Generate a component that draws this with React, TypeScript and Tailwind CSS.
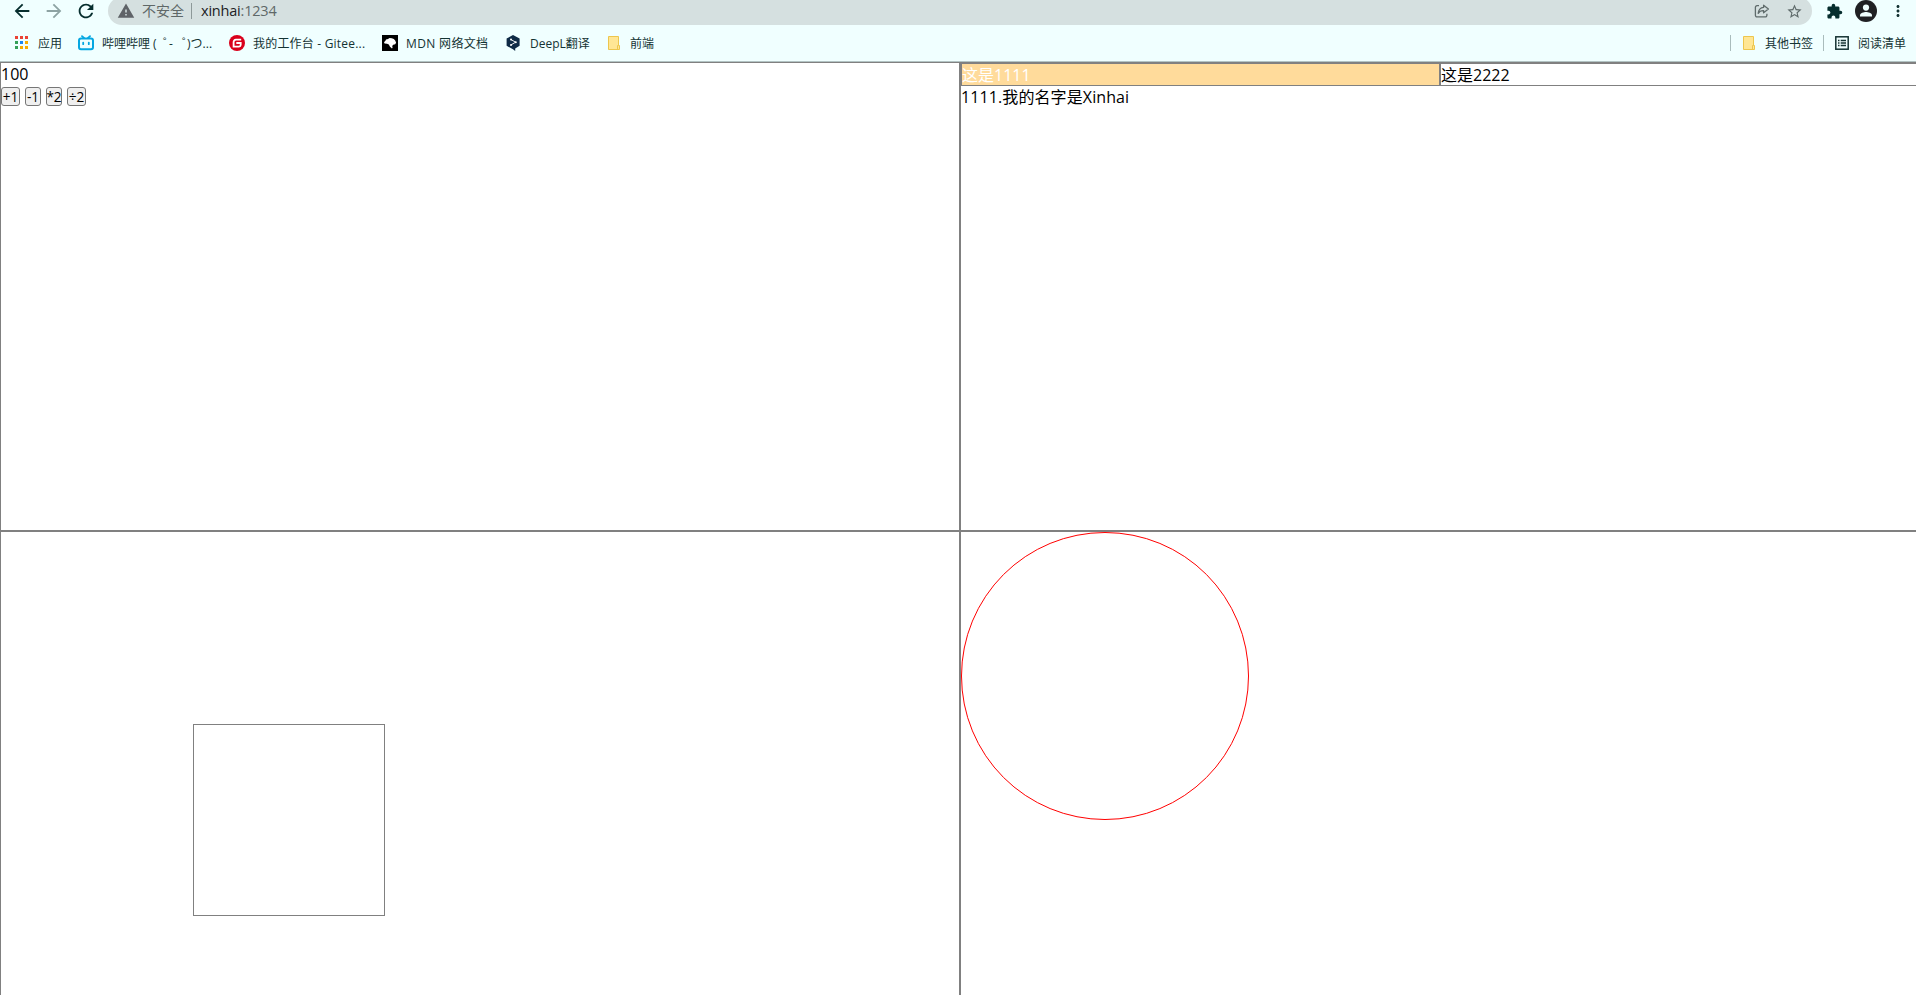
import { useState } from "react";
import type { ReactNode } from "react";
import {
  MdArrowBack,
  MdArrowForward,
  MdExtension,
  MdMoreVert,
  MdRefresh,
  MdStarBorder,
  MdWarning,
} from "react-icons/md";

function AppsIcon() {
  const colors = [
    ["#ea4335", "#ea4335", "#ea4335"],
    ["#34a058", "#1a86f5", "#f9ab00"],
    ["#34a058", "#f9ab00", "#f9ab00"],
  ];
  return (
    <svg width="16" height="16" viewBox="0 0 16 16">
      {colors.map((row, y) =>
        row.map((c, x) => (
          <rect key={`${x}${y}`} x={1 + x * 5} y={1 + y * 5} width="3" height="3" fill={c} />
        )),
      )}
    </svg>
  );
}

function BilibiliIcon() {
  return (
    <svg width="16" height="16" viewBox="0 0 16 16" fill="none" stroke="#06a7e1" strokeLinecap="round">
      <path d="M4 1.2 6 3M12 1.2 10 3" strokeWidth="1.8" />
      <rect x="1" y="3.5" width="14" height="10.8" rx="2" strokeWidth="2" />
      <path d="M5.2 7.6v1.6M10.8 7.6v1.6" strokeWidth="1.8" />
    </svg>
  );
}

function GiteeIcon() {
  return (
    <svg width="16" height="16" viewBox="0 0 16 16">
      <circle cx="8" cy="8" r="8" fill="#d9001b" />
      <path d="M12.2 4.6H7A2.6 2.6 0 0 0 4.6 7v4.6H10A1.8 1.8 0 0 0 11.7 10V8H7.3" fill="none" stroke="#fff" strokeWidth="1.8" />
    </svg>
  );
}

function MdnIcon() {
  return (
    <svg width="16" height="16" viewBox="0 0 16 16">
      <path fill="#000" d="M0 0h16v16H0z" />
      <path
        fill="#fff"
        d="M2 7.2 3.6 5.4 4 4.4 6 4l1.6-1 2.2.2 2 .8 1.4 1.6.9 2.2-.9 1.4-2 .6-1 1.2.4 1.5-.6 1L8 11.8 6.8 9.6 5 8.8 2.6 8.6Z"
      />
    </svg>
  );
}

function DeepLIcon() {
  return (
    <svg width="16" height="16" viewBox="0 0 16 16">
      <path fill="#0f2b46" d="M7 0 .6 3.6v7.2L7 14.3l2.2 1.7v-2.6l4.4-2.6V3.6Z" />
      <path d="M5 4.6 9.6 7.2 5 9.9" fill="none" stroke="#fff" strokeWidth="0.9" />
      <circle cx="5" cy="4.6" r="1" fill="#fff" />
      <circle cx="9.8" cy="7.2" r="1" fill="#fff" />
      <circle cx="5" cy="9.9" r="1" fill="#fff" />
    </svg>
  );
}

function FolderIcon() {
  return (
    <svg width="16" height="16" viewBox="0 0 16 16">
      <path d="M2.5 1.5h10v9h1v4h-11z" fill="#ffe694" stroke="#edc64d" />
      <path d="M11.5 14v-3.5h1" fill="none" stroke="#edc64d" />
    </svg>
  );
}

function ReadingListIcon() {
  return (
    <svg width="16" height="16" viewBox="0 0 16 16" stroke="#143333" fill="none">
      <rect x="1.8" y="1.8" width="12.4" height="12.4" strokeWidth="1.5" />
      <path d="M4 5.5h1.5M4 8h1.5M4 10.5h1.5M6.7 5.5H12M6.7 8H12M6.7 10.5H12" strokeWidth="1.3" />
    </svg>
  );
}

function ShareIcon() {
  return (
    <svg width="16" height="16" viewBox="0 0 16 16" fill="none" stroke="#5f6b6b" strokeWidth="1.3" strokeLinejoin="round">
      <path d="M5 2.7H3A1.6 1.6 0 0 0 1.4 4.3v8A1.6 1.6 0 0 0 3 13.9h8.3a1.6 1.6 0 0 0 1.6-1.6v-1.6" />
      <path d="M9.6 2.2 14.4 6 9.6 9.8V7.6C7 7.5 5.3 8.4 4.2 10.4 4.5 7 6.3 4.7 9.6 4.4Z" />
    </svg>
  );
}

function AvatarIcon() {
  return (
    <svg width="22" height="22" viewBox="0 0 22 22">
      <circle cx="11" cy="11" r="11" fill="#202124" />
      <circle cx="11" cy="7.6" r="3.1" fill="#f0ffff" />
      <path d="M5 16.6v-1.4c0-2.2 4-3.2 6-3.2s6 1 6 3.2v1.4Z" fill="#f0ffff" />
    </svg>
  );
}

function Bookmark({ icon, width, children }: { icon: ReactNode; width: string; children: ReactNode }) {
  return (
    <div className="flex items-center gap-2">
      {icon}
      <span className={`${width} pt-[2px] whitespace-nowrap`}>{children}</span>
    </div>
  );
}

function BrowserChrome() {
  return (
    <header className="h-[62px] shrink-0 overflow-hidden border-b border-[#b3c4c4] bg-[#f0ffff] text-[#143333]">
      <div className="flex h-[25px] items-center overflow-hidden pb-[3px]">
        <MdArrowBack className="ml-[11px] size-[22px] shrink-0 text-[#062e2e]" />
        <MdArrowForward className="ml-[10px] size-[22px] shrink-0 text-[#8da3a3]" />
        <MdRefresh className="ml-[10px] size-[22px] shrink-0 text-[#062e2e]" />
        <div className="ml-[11px] flex h-7 w-[1704px] shrink-0 items-center rounded-full bg-[#d5e0e0] text-[14px] text-[#5f6868]">
          <MdWarning className="ml-[9px] size-[18px] shrink-0 text-[#5f6368]" />
          <span className="ml-[7px] w-[42px] leading-5">不安全</span>
          <span className="ml-[7px] h-4 w-px bg-[#8d9999]" />
          <span className="ml-[9px] text-[14.5px] tracking-[-0.2px]">
            <span className="text-[#202124]">xinhai</span>:1234
          </span>
          <div className="mr-[9px] ml-auto flex items-center gap-4">
            <ShareIcon />
            <MdStarBorder className="size-[17px] text-[#5f6b6b]" />
          </div>
        </div>
        <MdExtension className="ml-[14px] size-[17px] shrink-0 text-[#062e2e]" />
        <span className="ml-[12px] shrink-0">
          <AvatarIcon />
        </span>
        <MdMoreVert className="ml-[12px] size-[18px] shrink-0 text-[#143333]" />
      </div>
      <div className="flex h-[36px] items-center pl-[14px] text-[12px] leading-4">
        <div className="flex items-center gap-4">
          <Bookmark icon={<AppsIcon />} width="w-[24px]">应用</Bookmark>
          <Bookmark icon={<BilibiliIcon />} width="w-[111px]">
            哔哩哔哩 (&nbsp; <span className="tracking-[-6px]">゜</span>-&nbsp;{" "}
            <span className="ml-[3px] tracking-[-7px]">゜</span>)つ...
          </Bookmark>
          <Bookmark icon={<GiteeIcon />} width="w-[113px] tracking-[0.2px]">我的工作台 - Gitee...</Bookmark>
          <Bookmark icon={<MdnIcon />} width="w-[84px] tracking-[0.35px]">MDN 网络文档</Bookmark>
          <Bookmark icon={<DeepLIcon />} width="w-[60px]">DeepL翻译</Bookmark>
          <Bookmark icon={<FolderIcon />} width="w-[24px]">前端</Bookmark>
        </div>
        <div className="mr-[10px] ml-auto flex items-center">
          <span className="mr-[10px] h-4 w-px bg-[#a9bcbc]" />
          <Bookmark icon={<FolderIcon />} width="w-[48px]">其他书签</Bookmark>
          <span className="mr-[10px] ml-[10px] h-4 w-px bg-[#a9bcbc]" />
          <Bookmark icon={<ReadingListIcon />} width="w-[48px]">阅读清单</Bookmark>
        </div>
      </div>
    </header>
  );
}

function Counter() {
  const [n, setN] = useState(100);
  const button =
    "flex h-[19px] items-center justify-center rounded-[3px] border border-[#767676] bg-[#efefef] text-[13.6px] leading-[17px] tracking-[-0.1px] text-black";
  return (
    <section className="border border-[#808080]">
      <div className="h-[24px] pt-px leading-[21px]">{n}</div>
      <div className="flex gap-[5px]">
        <button className={`${button} w-[19px]`} onClick={() => setN(n + 1)}>+1</button>
        <button className={`${button} w-[16px]`} onClick={() => setN(n - 1)}>-1</button>
        <button className={`${button} w-[16px]`} onClick={() => setN(n * 2)}>*2</button>
        <button className={`${button} w-[19px]`} onClick={() => setN(n / 2)}>÷2</button>
      </div>
    </section>
  );
}

function Tabs() {
  const [index, setIndex] = useState(0);
  const active = "bg-[#ffdb9b] text-white";
  const tab = "h-[23px] border-y border-[#808080] leading-[22px]";
  return (
    <section className="border border-[#808080]">
      <ol className="grid h-[23px] grid-cols-2">
        <li className={`${tab} border-x ${index === 0 ? active : ""}`} onClick={() => setIndex(0)}>
          这是1111
        </li>
        <li className={`${tab} border-x ${index === 1 ? active : ""}`} onClick={() => setIndex(1)}>
          这是2222
        </li>
      </ol>
      <div className="pt-px leading-[21px] tracking-[0.1px]">{index === 0 ? "1111.我的名字是Xinhai" : "2222"}</div>
    </section>
  );
}

export default function App() {
  return (
    <div className="flex h-[995px] w-[1916px] flex-col overflow-hidden bg-white font-['Open_Sans','Noto_Sans_CJK_SC',sans-serif]">
      <BrowserChrome />
      <main className="grid w-[1920px] grid-cols-2 grid-rows-[469px_469px] text-[16px] text-black">
        <Counter />
        <Tabs />
        <section className="border border-[#808080] pt-[192px] pl-[192px]">
          <div className="size-[192px] border border-[#808080]" />
        </section>
        <section className="border border-[#808080]">
          <div className="size-[288px] rounded-full border border-[#ff0000]" />
        </section>
      </main>
    </div>
  );
}
